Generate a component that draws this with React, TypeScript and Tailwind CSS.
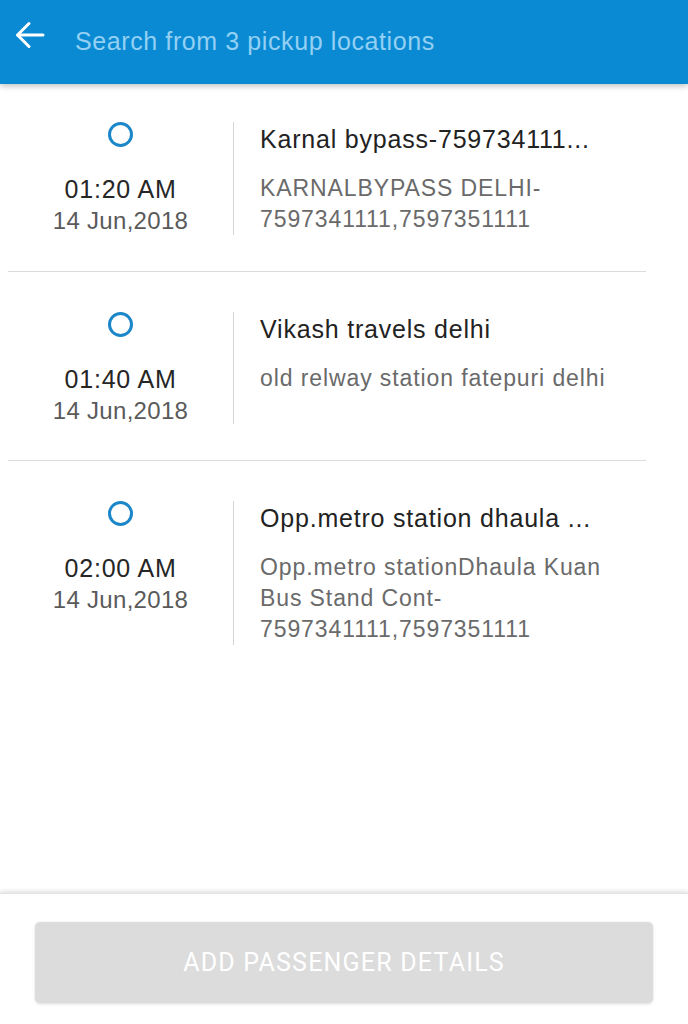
const pickups = [
  {
    time: "01:20 AM",
    date: "14 Jun,2018",
    name: "Karnal bypass-759734111...",
    address: ["KARNALBYPASS DELHI-", "7597341111,7597351111"],
  },
  {
    time: "01:40 AM",
    date: "14 Jun,2018",
    name: "Vikash travels delhi",
    address: ["old relway station fatepuri delhi"],
  },
  {
    time: "02:00 AM",
    date: "14 Jun,2018",
    name: "Opp.metro station dhaula ...",
    address: ["Opp.metro stationDhaula Kuan", "Bus Stand Cont-", "7597341111,7597351111"],
  },
];

export default function App() {
  return (
    <div className="h-screen w-full flex flex-col bg-white font-['Liberation_Sans',Arial,sans-serif] overflow-hidden">
      <header className="h-[84px] shrink-0 bg-[#0a8ad2] flex items-center shadow-[0_2px_6px_rgba(0,0,0,0.25)] z-10">
        <div className="w-[75px] flex pl-[15px] -mt-[14px]">
          <svg width="30" height="28" viewBox="0 0 30 28" fill="none" stroke="white" strokeWidth="3" strokeLinecap="round" strokeLinejoin="round">
            <path d="M28 14H3" />
            <path d="M14 2.5 2.5 14 14 25.5" />
          </svg>
        </div>
        <p className="text-[25px] tracking-[0.6px] text-[#93d0f3] -mt-[1px]">Search from 3 pickup locations</p>
      </header>

      <div className="flex-1">
        {pickups.map((p, i) => (
          <div
            key={i}
            className={`ml-2 mr-[42px] flex pb-[36px] ${i < pickups.length - 1 ? "border-b border-[#dcdcdc]" : ""} ${i === 0 ? "pt-[38px]" : "pt-[40px]"}`}
          >
            <div className="w-[226px] shrink-0 flex flex-col items-center border-r border-[#d6d6d6] min-h-[112px]">
              <div className="w-[25px] h-[25px] rounded-full border-[3px] border-[#1b87c9]" />
              <p className="text-[25px] leading-[30px] tracking-[0.8px] text-[#262626] mt-[27px]">{p.time}</p>
              <p className="text-[24px] leading-[27px] tracking-[0.3px] text-[#5a5a5a] mt-[3px]">{p.date}</p>
            </div>
            <div className="pl-[26px] flex flex-col">
              <p className="text-[25px] leading-[30px] tracking-[0.8px] text-[#222] mt-[2px]">{p.name}</p>
              <div className="mt-[19px] text-[23px] leading-[31px] tracking-[0.9px] text-[#6a6a6a]">
                {p.address.map((a, j) => (
                  <p key={j}>{a}</p>
                ))}
              </div>
            </div>
          </div>
        ))}
      </div>

      <footer className="h-[131px] shrink-0 bg-white shadow-[0_-2px_4px_rgba(0,0,0,0.12)] border-t border-[#e4e4e4] flex items-start justify-center pt-[28px]">
        <button
          type="button"
          className="w-[618px] h-[81px] rounded-[5px] bg-[#dcdcdc] text-white text-[25px] tracking-[1.2px] shadow-[0_1px_3px_rgba(0,0,0,0.15)] font-['Roboto',sans-serif]"
        >
          ADD PASSENGER DETAILS
        </button>
      </footer>
    </div>
  );
}
